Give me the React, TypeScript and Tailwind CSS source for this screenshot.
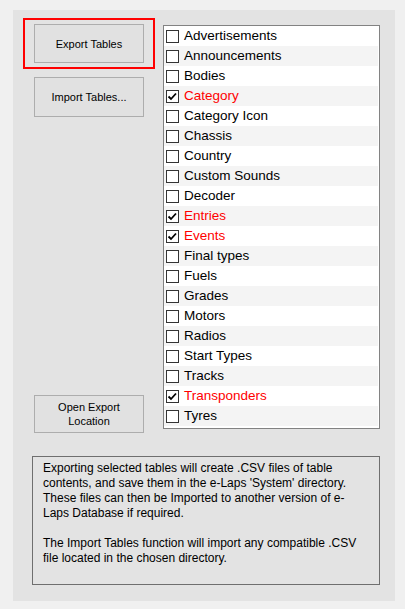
import React from 'react';

const TABLES: { name: string; checked: boolean }[] = [
  { name: 'Advertisements', checked: false },
  { name: 'Announcements', checked: false },
  { name: 'Bodies', checked: false },
  { name: 'Category', checked: true },
  { name: 'Category Icon', checked: false },
  { name: 'Chassis', checked: false },
  { name: 'Country', checked: false },
  { name: 'Custom Sounds', checked: false },
  { name: 'Decoder', checked: false },
  { name: 'Entries', checked: true },
  { name: 'Events', checked: true },
  { name: 'Final types', checked: false },
  { name: 'Fuels', checked: false },
  { name: 'Grades', checked: false },
  { name: 'Motors', checked: false },
  { name: 'Radios', checked: false },
  { name: 'Start Types', checked: false },
  { name: 'Tracks', checked: false },
  { name: 'Transponders', checked: true },
  { name: 'Tyres', checked: false },
];

const font = { fontFamily: '"Liberation Sans", Arial, sans-serif' };

const WinButton: React.FC<{ children: React.ReactNode; className?: string }> = ({ children, className = '' }) => (
  <button
    className={`w-[110px] flex items-center justify-center bg-[#e1e1e1] border border-[#adadad] text-[11px] leading-[14px] text-black text-center ${className}`}
  >
    {children}
  </button>
);

const CheckBox: React.FC<{ checked: boolean }> = ({ checked }) => (
  <div className="w-[13px] h-[13px] border border-[#333333] bg-white flex items-center justify-center shrink-0">
    {checked && (
      <svg width="11" height="11" viewBox="0 0 11 11">
        <path d="M1.5 5.5 L4 8 L9 2.5" fill="none" stroke="#000" strokeWidth="1.8" />
      </svg>
    )}
  </div>
);

export default function App() {
  return (
    <div className="w-[405px] h-[609px] bg-[#f0f0f0] pt-[10px] pl-[13px]" style={font}>
      <div className="w-[382px] h-[591px] bg-[#e3e3e3] flex flex-col">
        <div className="flex">
          <div className="flex flex-col ml-[10px] mt-[8px] w-[132px]">
            <div className="h-[51px] border-2 border-[#ff0000] pl-[9px] pt-[4px]">
              <WinButton className="h-[39px]">Export Tables</WinButton>
            </div>
            <WinButton className="h-[40px] mt-[8px] ml-[11px]">Import Tables...</WinButton>
            <WinButton className="h-[38px] mt-[278px] ml-[11px]">
              Open Export
              <br />
              Location
            </WinButton>
          </div>
          <div className="ml-[8px] mt-[15px] w-[217px] h-[404px] border border-[#828282] bg-white pr-[1px]">
            {TABLES.map((t, i) => (
              <div
                key={t.name}
                className={`h-[20px] flex items-center pl-[2px] gap-[5px] ${i % 2 === 1 ? 'bg-[#f4f4f4]' : 'bg-white'}`}
              >
                <CheckBox checked={t.checked} />
                <span className={`text-[13.5px] leading-[20px] ${t.checked ? 'text-[#ff0000]' : 'text-black'}`}>
                  {t.name}
                </span>
              </div>
            ))}
          </div>
        </div>
        <div className="ml-[19px] mt-[23px] w-[348px] h-[129px] border border-[#6f6f6f] pl-[10px] pr-[12px] pt-[4px] text-[12px] leading-[15px] text-black">
          <p>
            Exporting selected tables will create .CSV files of table contents, and save them in the e-Laps 'System'
            directory. These files can then be Imported to another version of e-Laps Database if required.
          </p>
          <p className="mt-[15px]">
            The Import Tables function will import any compatible .CSV file located in the chosen directory.
          </p>
        </div>
      </div>
    </div>
  );
}
